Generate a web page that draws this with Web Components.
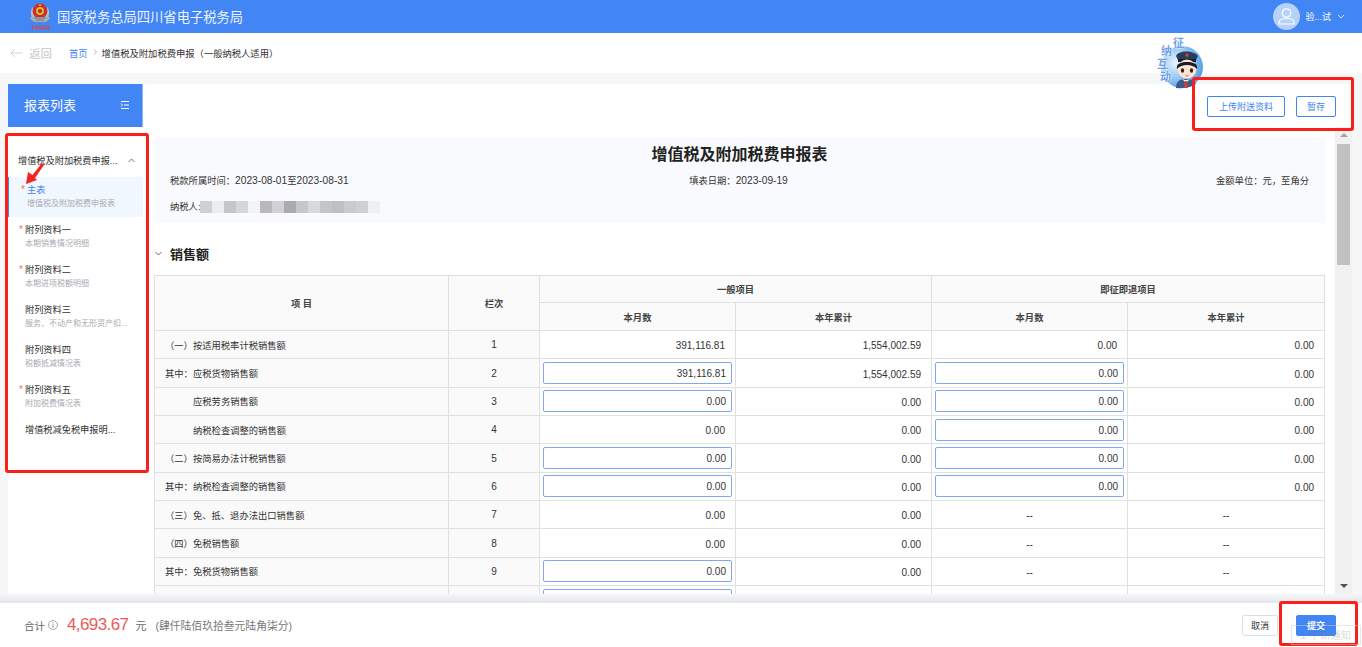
<!DOCTYPE html>
<html lang="zh">
<head>
<meta charset="utf-8">
<title>增值税及附加税费申报</title>
<style>
  html, body { margin: 0; padding: 0; height: 647px; overflow: hidden; }
  body {
    display: flex;
    flex-direction: column;
    position: relative;
    background: #f5f7f9;
    font-family: "Liberation Sans", "Noto Sans CJK SC", sans-serif;
    color: #333;
  }
</style>
</head>
<body>
  <tax-header></tax-header>
  <tax-crumb></tax-crumb>
  <tax-workspace></tax-workspace>
  <tax-footer></tax-footer>
  <tax-mark></tax-mark>

<script>
const FONT = '"Liberation Sans", "Noto Sans CJK SC", sans-serif';
const BLUE = '#4285f4';

class TaxButton extends HTMLElement {
  constructor() {
    super();
    this.attachShadow({ mode: 'open' });
  }

  connectedCallback() {
    const width = this.getAttribute('width') || '40';
    this.shadowRoot.innerHTML = `
      <style>
        :host {
          display: flex;
          align-items: center;
          justify-content: center;
          box-sizing: border-box;
          width: ${width}px;
          height: 21px;
          border: 1px solid ${BLUE};
          border-radius: 2px;
          font-size: 9px;
          color: ${BLUE};
          background: #fff;
        }
        :host([kind="primary"]) { background: ${BLUE}; color: #fff; font-weight: 700; }
        :host([kind="plain"]) { border-color: #dcdfe6; color: #333; }
      </style>
      <slot></slot>
    `;
  }
}
customElements.define('tax-button', TaxButton);

class TaxHeader extends HTMLElement {
  constructor() {
    super();
    this.attachShadow({ mode: 'open' });
  }

  connectedCallback() {
    this.shadowRoot.innerHTML = `
      <style>
        :host {
          display: flex;
          align-items: center;
          flex: none;
          height: 33px;
          background: ${BLUE};
          color: #fff;
          font-family: ${FONT};
        }
        .logo { margin-left: 29px; width: 22px; height: 31px; flex: none; }
        .title { margin-left: 6px; font-size: 13.3px; color: #eef4ff; }
        .user { margin-left: auto; display: flex; align-items: center; margin-right: 17px; font-size: 9px; }
        .avatar { width: 27px; height: 27px; margin-right: 5px; }
        .caret { width: 8px; height: 5px; margin-left: 6px; }
      </style>
      <svg class="logo" viewBox="0 0 22 31">
        <path d="M3 16 C1 12 2 8 4 6 L6 8 C4 11 5 15 7 17Z M19 16 C21 12 20 8 18 6 L16 8 C18 11 17 15 15 17Z" fill="#b9bcc0"/>
        <circle cx="11" cy="10" r="7.4" fill="#c9302c"/>
        <circle cx="11" cy="10" r="4" fill="#e6b422"/>
        <path d="M11 2.5 L12 5 L10 5Z" fill="#f2d04a"/>
        <circle cx="11" cy="10" r="2" fill="#b52a26"/>
        <path d="M1 17 C4 22 8 21 11 21 C14 21 18 22 21 17 L19 15 C16 19 14 18 11 18 C8 18 6 19 3 15Z" fill="#a9adb2"/>
        <rect x="7" y="16" width="8" height="4" fill="#8f9398"/>
        <path d="M2 26h3M3.5 24v5M7 25h3v3H7zM12 25h3v3h-3zM17 25h3v3h-3z" stroke="#d8453c" stroke-width="1" fill="none"/>
      </svg>
      <div class="title">国家税务总局四川省电子税务局</div>
      <div class="user">
        <svg class="avatar" viewBox="0 0 27 27">
          <circle cx="13.5" cy="13.5" r="13.5" fill="#b6d1fb"/>
          <circle cx="13.5" cy="10" r="4.2" fill="none" stroke="#fff" stroke-width="1.2"/>
          <path d="M6 21 v-1.5 c0-2.5 3-4 7.5-4 s7.500 1.500 7.500 4 V21 Z" fill="none" stroke="#fff" stroke-width="1.2"/>
        </svg>
        <span>验...试</span>
        <svg class="caret" viewBox="0 0 8 5"><path d="M1 1 L4 4 L7 1" fill="none" stroke="#dce8fd" stroke-width="1"/></svg>
      </div>
    `;
  }
}
customElements.define('tax-header', TaxHeader);

class TaxCrumb extends HTMLElement {
  constructor() {
    super();
    this.attachShadow({ mode: 'open' });
  }

  connectedCallback() {
    this.shadowRoot.innerHTML = `
      <style>
        :host {
          display: flex;
          align-items: center;
          flex: none;
          height: 40px;
          background: #fff;
          font-family: ${FONT};
          font-size: 9.3px;
          color: #333;
        }
        .arrow { width: 13px; height: 10px; margin-left: 10px; }
        .back { margin-left: 6px; font-size: 11.500px; color: #c4c6ca; }
        .home { margin-left: 17px; color: ${BLUE}; }
        .sep { width: 4px; height: 6px; margin: 0 5px 2px 5px; }
      </style>
      <svg class="arrow" viewBox="0 0 13 10"><path d="M12.500 5 H1 M5 1 L1 5 L5 9" fill="none" stroke="#cfd1d4" stroke-width="1"/></svg>
      <span class="back">返回</span>
      <span class="home">首页</span>
      <svg class="sep" viewBox="0 0 4 6"><path d="M1 .5 L3.500 3 L1 5.500" fill="none" stroke="#999" stroke-width=".8"/></svg>
      <span>增值税及附加税费申报（一般纳税人适用）</span>
    `;
  }
}
customElements.define('tax-crumb', TaxCrumb);

class SideItem extends HTMLElement {
  constructor() {
    super();
    this.attachShadow({ mode: 'open' });
  }

  connectedCallback() {
    const star = this.hasAttribute('star') ? '<i>*</i>' : '';
    this.shadowRoot.innerHTML = `
      <style>
        :host {
          display: flex;
          flex-direction: column;
          justify-content: center;
          position: relative;
          box-sizing: border-box;
          height: 40px;
          padding: 0 12px 2px 17px;
          font-size: 9.2px;
          color: #333;
          white-space: nowrap;
        }
        :host([active]) {
          padding-left: 18px;
          background: #f0f7ff;
          border-left: 1px solid ${BLUE};
          color: ${BLUE};
        }
        i { position: absolute; left: 11px; top: 7px; font-style: normal; font-size: 10px; color: #f56c6c; }
        :host([active]) i { left: 12px; }
        .name { line-height: 14px; }
        .sub { height: 13px; line-height: 14px; font-size: 8px; color: #a8abb2; overflow: hidden; text-overflow: ellipsis; }
      </style>
      ${star}
      <div class="name"><slot></slot></div>
      <div class="sub">${this.getAttribute('sub') || ''}</div>
    `;
  }
}
customElements.define('side-item', SideItem);

class SideMenu extends HTMLElement {
  constructor() {
    super();
    this.attachShadow({ mode: 'open' });
  }

  connectedCallback() {
    this.shadowRoot.innerHTML = `
      <style>
        :host {
          display: flex;
          flex-direction: column;
          flex: none;
          width: 135px;
          margin-left: 8px;
          background: #fff;
          font-family: ${FONT};
        }
        .head {
          display: flex;
          align-items: center;
          justify-content: space-between;
          box-sizing: border-box;
          height: 43px;
          padding: 0 12px 2px 16px;
          background: ${BLUE};
          border-right: 1px solid #8db4f8;
          color: #fff;
          font-size: 13px;
        }
        .head svg { width: 10px; height: 10px; }
        .group {
          display: flex;
          align-items: center;
          justify-content: space-between;
          height: 50px;
          padding: 16px 8px 0 10px;
          box-sizing: border-box;
          font-size: 9.2px;
          color: #333;
          white-space: nowrap;
        }
        .group svg { width: 7px; height: 5px; }
        .rest { flex: 1; }
      </style>
      <div class="head">
        <span>报表列表</span>
        <svg viewBox="0 0 10 10"><path d="M1 1.500 H9 M4 5 H9 M1 8.500 H9 M1 3.500 L2.500 5 L1 6.500" fill="none" stroke="#fff" stroke-width="1"/></svg>
      </div>
      <div class="group">
        <span>增值税及附加税费申报...</span>
        <svg viewBox="0 0 7 5"><path d="M.5 4 L3.500 1 L6.500 4" fill="none" stroke="#777" stroke-width="1"/></svg>
      </div>
      <side-item star active sub="增值税及附加税费申报表">主表</side-item>
      <side-item star sub="本期销售情况明细">附列资料一</side-item>
      <side-item star sub="本期进项税额明细">附列资料二</side-item>
      <side-item sub="服务、不动产和无形资产扣...">附列资料三</side-item>
      <side-item sub="税额抵减情况表">附列资料四</side-item>
      <side-item star sub="附加税费情况表">附列资料五</side-item>
      <side-item>增值税减免税申报明...</side-item>
      <div class="rest"></div>
    `;
  }
}
customElements.define('side-menu', SideMenu);

class InfoPanel extends HTMLElement {
  constructor() {
    super();
    this.attachShadow({ mode: 'open' });
  }

  connectedCallback() {
    // mosaic that hides the taxpayer name
    const shades = ['#cfd0d4', '#eceded', '#c5c6c8', '#d6d7db', '#f3f4f5', '#b9b8bc', '#d0d0d6', '#a9abaf',
      '#c6c7cb', '#d8d9dc', '#c4c5c9', '#bfc0c4', '#c8cbd0', '#cfd0d4', '#eff0f3'];
    const mosaic = shades.map(c => `<b style="background:${c}"></b>`).join('');
    this.shadowRoot.innerHTML = `
      <style>
        :host {
          display: block;
          box-sizing: border-box;
          height: 86px;
          padding: 8px 16px 0;
          background: #f9fafd;
          font-size: 9.3px;
          color: #333;
        }
        h1 { margin: 0; height: 20px; line-height: 20px; font-size: 16px; text-align: center; color: #222; }
        .line { display: grid; grid-template-columns: 1fr 1fr 1fr; margin-top: 9px; line-height: 14px; }
        .line span:nth-child(2) { text-align: center; padding-right: 2px; }
        .line span:nth-child(3) { text-align: right; }
        .line em { font-style: normal; font-size: 10.200px; }
        .payer { display: flex; align-items: center; margin-top: 12px; line-height: 14px; }
        .mosaic { display: flex; height: 12px; }
        .mosaic b { display: block; width: 12px; height: 12px; }
      </style>
      <h1>增值税及附加税费申报表</h1>
      <div class="line">
        <span>税款所属时间：<em>2023-08-01</em>至<em>2023-08-31</em></span>
        <span>填表日期：<em>2023-09-19</em></span>
        <span>金额单位：元，至角分</span>
      </div>
      <div class="payer"><span>纳税人:</span><div class="mosaic">${mosaic}</div></div>
    `;
  }
}
customElements.define('info-panel', InfoPanel);

class TaxInput extends HTMLElement {
  constructor() {
    super();
    this.attachShadow({ mode: 'open' });
  }

  connectedCallback() {
    this.shadowRoot.innerHTML = `
      <style>
        :host {
          display: block;
          box-sizing: border-box;
          height: 22px;
          line-height: 21px;
          padding: 0 5px;
          border: 1px solid #7fa8ee;
          border-radius: 2px;
          background: #fff;
          text-align: right;
        }
      </style>
      <slot></slot>
    `;
  }
}
customElements.define('tax-input', TaxInput);

// label, indent, line no, then 4 values; a leading "i" marks an editable cell
// the last row is cut by the footer, only its top edge shows
const SALES_ROWS = [
  ['（一）按适用税率计税销售额', 0, 1, '391,116.81', '1,554,002.59', '0.00', '0.00'],
  ['其中：应税货物销售额', 0, 2, 'i391,116.81', '1,554,002.59', 'i0.00', '0.00'],
  ['应税劳务销售额', 28, 3, 'i0.00', '0.00', 'i0.00', '0.00'],
  ['纳税检查调整的销售额', 28, 4, '0.00', '0.00', 'i0.00', '0.00'],
  ['（二）按简易办法计税销售额', 0, 5, 'i0.00', '0.00', 'i0.00', '0.00'],
  ['其中：纳税检查调整的销售额', 0, 6, 'i0.00', '0.00', 'i0.00', '0.00'],
  ['（三）免、抵、退办法出口销售额', 0, 7, '0.00', '0.00', '--', '--'],
  ['（四）免税销售额', 0, 8, '0.00', '0.00', '--', '--'],
  ['其中：免税货物销售额', 0, 9, 'i0.00', '0.00', '--', '--'],
  ['', 28, '', 'i', '', '', '']
];

class SalesTable extends HTMLElement {
  constructor() {
    super();
    this.attachShadow({ mode: 'open' });
  }

  cell(value) {
    if (value === '--') return `<td class="none">--</td>`;
    if (value[0] === 'i') return `<td class="edit"><tax-input>${value.slice(1)}</tax-input></td>`;
    return `<td class="num">${value}</td>`;
  }

  connectedCallback() {
    const rows = SALES_ROWS.map(([label, indent, no, ...values]) => `
      <tr>
        <th class="label" style="padding-left:${10 + indent}px">${label}</th>
        <th class="no">${no}</th>
        ${values.map(v => this.cell(v)).join('')}
      </tr>`).join('');
    this.shadowRoot.innerHTML = `
      <style>
        :host { display: block; font-size: 9.3px; color: #333; }
        table { border-collapse: collapse; table-layout: fixed; width: 1170px; }
        th, td { border: 1px solid #e0e0e0; padding: 0; box-sizing: border-box; }
        tbody th, tbody td { height: 28.350px; }
        thead th { background: #fafafa; font-weight: 700; text-align: center; color: #444; }
        tbody th { background: #fafafa; font-weight: 400; }
        .label { text-align: left; }
        .no { text-align: center; font-size: 10px; }
        .num { text-align: right; padding: 2px 10px 0 0; font-size: 10px; }
        .edit { padding: 0 3px; font-size: 10px; }
        .none { text-align: center; padding-top: 2px; font-size: 10px; }
      </style>
      <table>
        <colgroup>
          <col style="width:294px"><col style="width:91px"><col style="width:196px">
          <col style="width:196px"><col style="width:196px"><col style="width:197px">
        </colgroup>
        <thead>
          <tr style="height:27px">
            <th rowspan="2">项 目</th>
            <th rowspan="2">栏次</th>
            <th colspan="2">一般项目</th>
            <th colspan="2">即征即退项目</th>
          </tr>
          <tr style="height:28px">
            <th>本月数</th><th>本年累计</th><th>本月数</th><th>本年累计</th>
          </tr>
        </thead>
        <tbody>${rows}</tbody>
      </table>
    `;
  }
}
customElements.define('sales-table', SalesTable);

class TaxScrollbar extends HTMLElement {
  constructor() {
    super();
    this.attachShadow({ mode: 'open' });
  }

  connectedCallback() {
    this.shadowRoot.innerHTML = `
      <style>
        :host {
          display: flex;
          flex-direction: column;
          align-items: center;
          flex: none;
          width: 17px;
          background: #f1f1f1;
        }
        .up { margin-top: 6px; border: 4px solid transparent; border-top: 0; border-bottom: 4px solid #a3a3a3; }
        .thumb { width: 13px; height: 121px; margin-top: 7px; background: #c1c1c1; }
        .down { margin-top: auto; margin-bottom: 6px; border: 4px solid transparent; border-bottom: 0; border-top: 4px solid #505050; }
      </style>
      <div class="up"></div>
      <div class="thumb"></div>
      <div class="down"></div>
    `;
  }
}
customElements.define('tax-scrollbar', TaxScrollbar);

class TaxWorkspace extends HTMLElement {
  constructor() {
    super();
    this.attachShadow({ mode: 'open' });
  }

  connectedCallback() {
    this.shadowRoot.innerHTML = `
      <style>
        :host {
          display: flex;
          flex: none;
          height: 510px;
          margin-top: 11px;
          font-family: ${FONT};
          overflow: hidden;
        }
        .main { display: flex; flex-direction: column; width: 1209px; background: #fff; flex: none; }
        .tools { display: flex; justify-content: flex-end; gap: 11px; box-sizing: border-box; height: 43px; padding: 12px 16px 0 0; flex: none; }
        .body { display: flex; flex: 1; min-height: 0; }
        .scroll { flex: 1; min-width: 0; padding: 10px 10px 0 11px; overflow: hidden; }
        .section { display: flex; align-items: center; height: 30px; margin: 15px 0 7px; font-size: 13px; font-weight: 700; color: #222; }
        .section svg { width: 7px; height: 5px; margin: 0 8px 0 1px; }
      </style>
      <side-menu></side-menu>
      <div class="main">
        <div class="tools">
          <tax-button width="78">上传附送资料</tax-button>
          <tax-button width="40">暂存</tax-button>
        </div>
        <div class="body">
          <div class="scroll">
            <info-panel></info-panel>
            <div class="section">
              <svg viewBox="0 0 7 5"><path d="M.5 1 L3.500 4 L6.500 1" fill="none" stroke="#666" stroke-width="1"/></svg>
              销售额
            </div>
            <sales-table></sales-table>
          </div>
          <tax-scrollbar></tax-scrollbar>
        </div>
      </div>
    `;
  }
}
customElements.define('tax-workspace', TaxWorkspace);

class TaxFooter extends HTMLElement {
  constructor() {
    super();
    this.attachShadow({ mode: 'open' });
  }

  connectedCallback() {
    this.shadowRoot.innerHTML = `
      <style>
        :host {
          display: block;
          flex: none;
          height: 53px;
          font-family: ${FONT};
          color: #666;
        }
        .fade { height: 9px; background: linear-gradient(#f6f7f9, #e4e5ea); }
        .bar { display: flex; align-items: center; height: 44px; padding: 0 26px 0 24px; background: #fff; box-sizing: border-box; }
        .sum { font-size: 10.500px; }
        .info { width: 10px; height: 10px; margin: 0 9px 0 3px; }
        .amount { font-size: 17px; letter-spacing: -.6px; color: #ec5b5b; }
        .unit { margin: 0 9px 0 7px; font-size: 11px; }
        .cn { font-size: 10.800px; color: #777; }
        .acts { display: flex; gap: 18px; margin-left: auto; }
      </style>
      <div class="fade"></div>
      <div class="bar">
        <span class="sum">合计</span>
        <svg class="info" viewBox="0 0 9 9">
          <circle cx="4.500" cy="4.500" r="4" fill="none" stroke="#999" stroke-width=".8"/>
          <path d="M4.500 3.800 V7 M4.500 2 V3" stroke="#999" stroke-width=".9"/>
        </svg>
        <span class="amount">4,693.67</span>
        <span class="unit">元</span>
        <span class="cn">(肆仟陆佰玖拾叁元陆角柒分)</span>
        <div class="acts">
          <tax-button kind="plain" width="36">取消</tax-button>
          <tax-button kind="primary" width="40">提交</tax-button>
        </div>
      </div>
    `;
  }
}
customElements.define('tax-footer', TaxFooter);

// everything that lies over the page: mascot, red review marks, faint toast
class TaxMark extends HTMLElement {
  constructor() {
    super();
    this.attachShadow({ mode: 'open' });
  }

  connectedCallback() {
    this.shadowRoot.innerHTML = `
      <style>
        :host { position: absolute; left: 0; top: 0; width: 1362px; height: 647px; pointer-events: none; font-family: ${FONT}; }
        .box { position: absolute; box-sizing: border-box; border: 3px solid #fb1f1a; border-radius: 3px; }
        .mascot { position: absolute; left: 1150px; top: 38px; width: 54px; height: 52px; }
        .tag {
          position: absolute;
          font-size: 11px;
          font-weight: 700;
          color: #6f9fe6;
          text-shadow: 0 0 2px #fff, 0 0 2px #fff;
          line-height: 11px;
        }
        .arrow { position: absolute; left: 22px; top: 160px; width: 24px; height: 26px; }
        .toast {
          position: absolute;
          left: 1291px;
          top: 625px;
          width: 70px;
          height: 20px;
          box-sizing: border-box;
          border: 1px solid rgba(210, 210, 210, .5);
          font-size: 10.500px;
          line-height: 18px;
          text-align: center;
          white-space: nowrap;
          color: rgba(120, 120, 120, .3);
        }
      </style>
      <svg class="mascot" viewBox="0 0 54 52">
        <defs>
          <radialGradient id="sky" cx=".35" cy=".4" r=".75">
            <stop offset="0" stop-color="#eaf6ff"/><stop offset="1" stop-color="#3f93e6"/>
          </radialGradient>
        </defs>
        <circle cx="32" cy="29" r="21" fill="url(#sky)"/>
        <path d="M26 50 C26 44 29 41 36 41 C42 41 45 43 46 46 C40 50 32 51 26 50Z" fill="#3a5a8c"/>
        <path d="M32 41 L36 45 L40 41 L37 42 L35 42Z" fill="#f2f2f2"/>
        <path d="M35 43 h2 l.8 7 h-3.600Z" fill="#d8402f"/>
        <path d="M26 18 C28 12 44 12 48 18 L45 24 H29Z" fill="#2a3d5c"/>
        <rect x="28" y="21" width="18" height="3" fill="#141f33"/>
        <circle cx="37" cy="17" r="1.700" fill="#d8402f"/>
        <ellipse cx="37" cy="31" rx="9.500" ry="9.500" fill="#fde3d0"/>
        <path d="M27 31 C26 26 30 24 37 24 C44 24 48 26 47 31 C44 28 41 27 37 27 C33 27 30 28 27 31Z" fill="#1c1c24"/>
        <ellipse cx="32.500" cy="32.500" rx="1.600" ry="2.200" fill="#27211f"/>
        <ellipse cx="41.500" cy="32.500" rx="1.600" ry="2.200" fill="#27211f"/>
        <path d="M35.500 37.500 q1.500 1.200 3 0" fill="none" stroke="#c2504a" stroke-width=".8"/>
      </svg>
      <span class="tag" style="left:1173px;top:38px">征</span>
      <span class="tag" style="left:1161px;top:46px">纳</span>
      <span class="tag" style="left:1157px;top:59px">互</span>
      <span class="tag" style="left:1160px;top:72px">动</span>

      <div class="box" style="left:5px;top:133px;width:144px;height:340px"></div>
      <div class="box" style="left:1192px;top:77px;width:162px;height:54px"></div>
      <div class="box" style="left:1279px;top:601px;width:79px;height:45px"></div>

      <svg class="arrow" viewBox="0 0 24 26">
        <path d="M4 24 L6 12 L10.500 15 L20 3 L22 5 L13 18 L15 20Z" fill="#f3261e"/>
      </svg>
      <div class="toast">1 个新通知</div>
    `;
  }
}
customElements.define('tax-mark', TaxMark);
</script>
</body>
</html>
